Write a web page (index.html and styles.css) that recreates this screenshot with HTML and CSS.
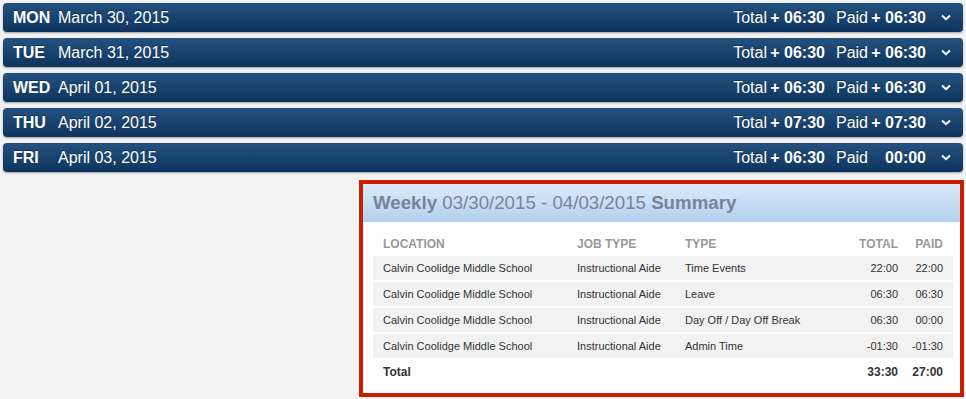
FILE: index.html
```html
<!DOCTYPE html>
<html lang="en">
<head>
  <meta charset="UTF-8" />
  <title>Timesheet Week</title>
  <link rel="stylesheet" href="styles.css">
</head>
<body>

  <div class="days">
    <div class="day-bar">
      <span class="day-name">MON</span>
      <span class="day-date">March 30, 2015</span>
      <span class="stat-label">Total</span><span class="stat-value">+ 06:30</span>
      <span class="stat-label paid">Paid</span><span class="stat-value">+ 06:30</span>
      <svg class="chevron" width="10" height="7" viewBox="0 0 10 7"><path d="M1 1.5 L5 5.2 L9 1.5" /></svg>
    </div>
    <div class="day-bar">
      <span class="day-name">TUE</span>
      <span class="day-date">March 31, 2015</span>
      <span class="stat-label">Total</span><span class="stat-value">+ 06:30</span>
      <span class="stat-label paid">Paid</span><span class="stat-value">+ 06:30</span>
      <svg class="chevron" width="10" height="7" viewBox="0 0 10 7"><path d="M1 1.5 L5 5.2 L9 1.5" /></svg>
    </div>
    <div class="day-bar">
      <span class="day-name">WED</span>
      <span class="day-date">April 01, 2015</span>
      <span class="stat-label">Total</span><span class="stat-value">+ 06:30</span>
      <span class="stat-label paid">Paid</span><span class="stat-value">+ 06:30</span>
      <svg class="chevron" width="10" height="7" viewBox="0 0 10 7"><path d="M1 1.5 L5 5.2 L9 1.5" /></svg>
    </div>
    <div class="day-bar">
      <span class="day-name">THU</span>
      <span class="day-date">April 02, 2015</span>
      <span class="stat-label">Total</span><span class="stat-value">+ 07:30</span>
      <span class="stat-label paid">Paid</span><span class="stat-value">+ 07:30</span>
      <svg class="chevron" width="10" height="7" viewBox="0 0 10 7"><path d="M1 1.5 L5 5.2 L9 1.5" /></svg>
    </div>
    <div class="day-bar">
      <span class="day-name">FRI</span>
      <span class="day-date">April 03, 2015</span>
      <span class="stat-label">Total</span><span class="stat-value">+ 06:30</span>
      <span class="stat-label paid">Paid</span><span class="stat-value">00:00</span>
      <svg class="chevron" width="10" height="7" viewBox="0 0 10 7"><path d="M1 1.5 L5 5.2 L9 1.5" /></svg>
    </div>
  </div>

  <div class="summary">
    <h2 class="summary-title"><b>Weekly</b> 03/30/2015 - 04/03/2015 <b>Summary</b></h2>
    <div class="summary-body">
      <table class="summary-table">
        <colgroup>
          <col class="col-location">
          <col class="col-job">
          <col class="col-type">
          <col class="col-total">
          <col class="col-paid">
        </colgroup>
        <thead>
          <tr>
            <th>Location</th>
            <th>Job Type</th>
            <th>Type</th>
            <th class="num">Total</th>
            <th class="num">Paid</th>
          </tr>
        </thead>
        <tbody>
          <tr>
            <td>Calvin Coolidge Middle School</td>
            <td>Instructional Aide</td>
            <td>Time Events</td>
            <td class="num">22:00</td>
            <td class="num">22:00</td>
          </tr>
          <tr>
            <td>Calvin Coolidge Middle School</td>
            <td>Instructional Aide</td>
            <td>Leave</td>
            <td class="num">06:30</td>
            <td class="num">06:30</td>
          </tr>
          <tr>
            <td>Calvin Coolidge Middle School</td>
            <td>Instructional Aide</td>
            <td>Day Off / Day Off Break</td>
            <td class="num">06:30</td>
            <td class="num">00:00</td>
          </tr>
          <tr>
            <td>Calvin Coolidge Middle School</td>
            <td>Instructional Aide</td>
            <td>Admin Time</td>
            <td class="num">-01:30</td>
            <td class="num">-01:30</td>
          </tr>
        </tbody>
        <tfoot>
          <tr>
            <td>Total</td>
            <td></td>
            <td></td>
            <td class="num">33:30</td>
            <td class="num">27:00</td>
          </tr>
        </tfoot>
      </table>
    </div>
  </div>

</body>
</html>
```

FILE: styles.css
```css
body {
  font-family: "Liberation Sans", Arial, sans-serif;
  background-color: #f2f2f2;
  color: #333;
  margin: 0;
  padding: 3px 2px 0 3px;
}

.days {
  display: flex;
  flex-direction: column;
  gap: 6px;
  margin-right: 1px;
}

.day-bar {
  display: flex;
  align-items: center;
  height: 29px;
  padding: 0 12px 0 10px;
  border-radius: 4px;
  background: linear-gradient(#24527f, #0d345e);
  box-shadow: 0 1px 2px rgba(0, 0, 0, 0.35);
  color: #fff;
  font-size: 16px;
  text-shadow: 0 -1px 0 rgba(0, 0, 0, 0.35);
}

.day-name {
  font-weight: bold;
  width: 45px;
}

.day-date {
  flex: 1;
}

.stat-value {
  font-weight: bold;
  width: 58px;
  text-align: right;
}

.stat-label.paid {
  margin-left: 11px;
}

.chevron {
  margin-left: 15px;
  fill: none;
  stroke: #fff;
  stroke-width: 2;
}

.summary {
  width: 597px;
  margin: 8px 0 0 auto;
  border: 4px solid #c91e00;
  background-color: #fff;
}

.summary-title {
  margin: 0;
  height: 38px;
  line-height: 38px;
  padding: 0 10px;
  font-size: 18.7px;
  font-weight: normal;
  color: #788495;
  background: linear-gradient(#dcebfc, #b3cfee);
}

.summary-body {
  padding: 9px 7px 7px 10px;
}

.summary-table {
  width: 100%;
  table-layout: fixed;
  border-collapse: separate;
  border-spacing: 0 2px;
  font-size: 11px;
}

.col-location { width: 194px; }
.col-job { width: 108px; }
.col-type { width: 173px; }
.col-total { width: 60px; }
.col-paid { width: 45px; }

.summary-table th,
.summary-table td {
  padding: 0 10px;
  text-align: left;
  white-space: nowrap;
}

.summary-table th {
  height: 21px;
  color: #999;
  font-size: 12px;
  font-weight: bold;
  text-transform: uppercase;
}

.summary-table tbody td {
  height: 24px;
  background-color: #f2f2f2;
}

.summary-table tfoot td {
  height: 24px;
  font-size: 12px;
  font-weight: bold;
}

.summary-table .num {
  text-align: right;
  padding-left: 0;
}
```
